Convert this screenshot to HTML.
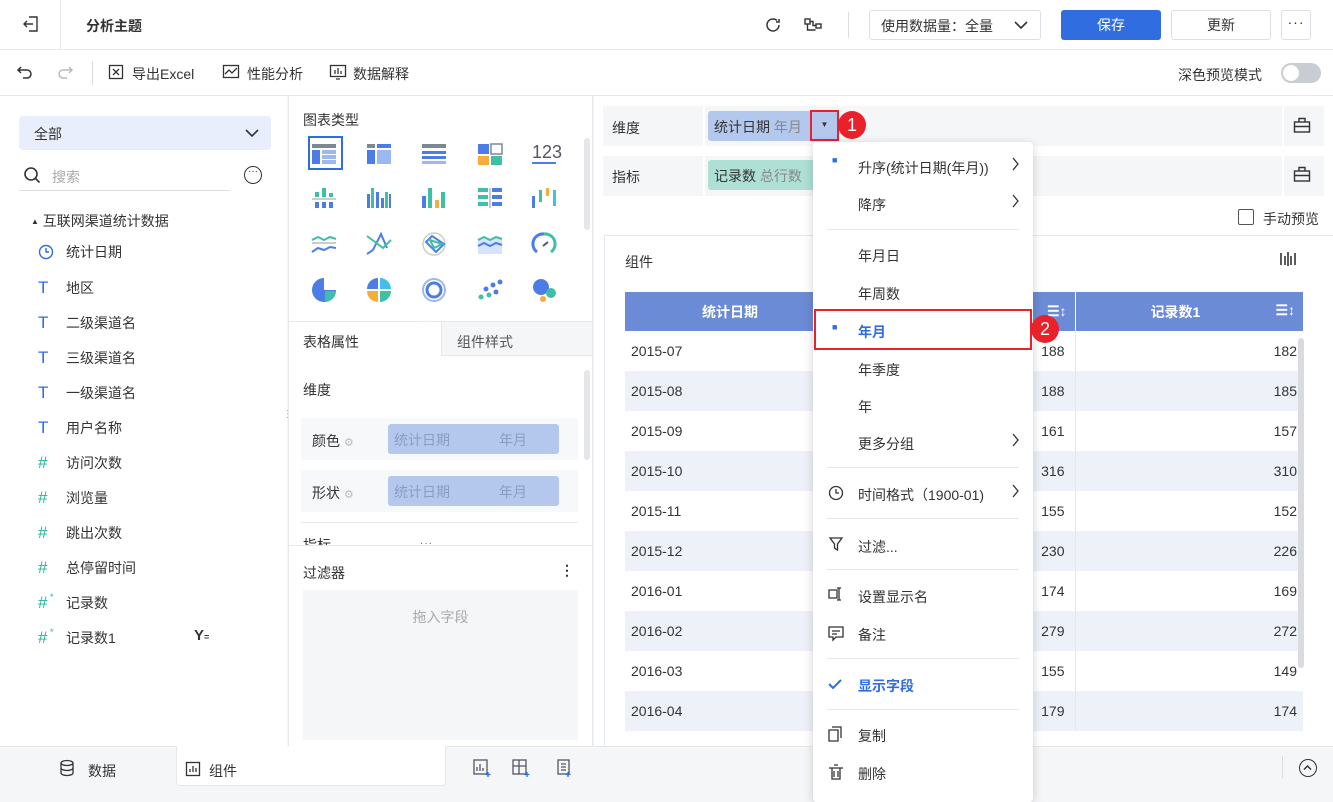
<!DOCTYPE html>
<html><head><meta charset="utf-8"><style>
*{box-sizing:border-box;margin:0;padding:0}
body{width:1333px;height:798px;overflow:hidden;font-family:"Liberation Sans","Noto Sans CJK SC",sans-serif;font-size:14px;color:#333;background:#f5f6f8;position:relative}
.a{position:absolute}
.t{font-size:14px;color:#333}
.tr td{height:40px}
.fl div{height:35px;line-height:35px;position:relative}
.fl span{display:inline-block;width:28px;font-size:17px}
</style></head><body>
<div class="a" style="left:0;top:0;width:1333px;height:50px;background:#fff;border-bottom:1px solid #e6e8eb"></div>
<div class="a" style="left:60px;top:0;width:1px;height:50px;background:#e6e8eb"></div>
<svg class="a" style="left:22px;top:15px" width="18" height="18" viewBox="0 0 18 18" fill="none" stroke="#333" stroke-width="1.4"><path d="M7 2h8v14H7M11 9H2M5 6L2 9l3 3"/></svg>
<div class="a t" style="left:86px;top:16px;font-weight:bold">分析主题</div>
<svg class="a" style="left:763px;top:15px" width="20" height="20" viewBox="0 0 20 20" fill="none" stroke="#333" stroke-width="1.5"><path d="M16 10a6 6 0 1 1-2-4.5M16 4v3h-3"/></svg>
<svg class="a" style="left:803px;top:15px" width="20" height="20" viewBox="0 0 20 20" fill="none" stroke="#333" stroke-width="1.4"><rect x="2" y="4" width="5" height="5"/><rect x="13" y="9" width="5" height="4"/><path d="M4.5 9v6h8M7 6.5h3v4h3"/></svg>
<div class="a" style="left:848px;top:12px;width:1px;height:26px;background:#ddd"></div>
<div class="a" style="left:869px;top:10px;width:172px;height:30px;border:1px solid #dcdfe6;border-radius:3px;background:#fff;padding:5px 11px;color:#333">使用数据量：全量 <svg style="position:absolute;right:12px;top:9px" width="14" height="10" viewBox="0 0 14 10" fill="none" stroke="#333" stroke-width="1.6"><path d="M1 2l6 6 6-6"/></svg></div>
<div class="a" style="left:1061px;top:10px;width:100px;height:30px;background:#2f6de1;border-radius:3px;color:#fff;text-align:center;line-height:30px">保存</div>
<div class="a" style="left:1171px;top:10px;width:100px;height:30px;border:1px solid #dcdfe6;border-radius:3px;background:#fff;text-align:center;line-height:28px">更新</div>
<div class="a" style="left:1281px;top:10px;width:30px;height:30px;border:1px solid #dcdfe6;border-radius:3px;background:#fff;text-align:center;line-height:22px;letter-spacing:1px">···</div>
<div class="a" style="left:0;top:50px;width:1333px;height:46px;background:#fff;border-bottom:1px solid #e6e8eb"></div>
<svg class="a" style="left:16px;top:64px" width="18" height="16" viewBox="0 0 18 16" fill="none" stroke="#333" stroke-width="1.5"><path d="M5 3L2 6l3 3M2 6h9a4 4 0 0 1 0 8H7"/></svg>
<svg class="a" style="left:56px;top:64px" width="18" height="16" viewBox="0 0 18 16" fill="none" stroke="#bbb" stroke-width="1.5"><path d="M13 3l3 3-3 3M16 6H7a4 4 0 0 0 0 8h4"/></svg>
<div class="a" style="left:92px;top:61px;width:1px;height:24px;background:#ddd"></div>
<svg class="a" style="left:108px;top:64px" width="16" height="16" viewBox="0 0 16 16" fill="none" stroke="#333" stroke-width="1.3"><rect x="1.5" y="1.5" width="13" height="13"/><path d="M5 5l6 6M11 5l-6 6"/></svg>
<div class="a t" style="left:132px;top:64px">导出Excel</div>
<svg class="a" style="left:222px;top:64px" width="18" height="16" viewBox="0 0 18 16" fill="none" stroke="#333" stroke-width="1.3"><rect x="1.5" y="1.5" width="15" height="12"/><path d="M3 10l4-4 3 3 5-5"/></svg>
<div class="a t" style="left:247px;top:64px">性能分析</div>
<svg class="a" style="left:329px;top:64px" width="18" height="16" viewBox="0 0 18 16" fill="none" stroke="#333" stroke-width="1.3"><rect x="1.5" y="1.5" width="15" height="11"/><path d="M6 10V6M9 10V4M12 10V7M7 15h4"/></svg>
<div class="a t" style="left:353px;top:64px">数据解释</div>
<div class="a t" style="left:1178px;top:65px">深色预览模式</div>
<div class="a" style="left:1281px;top:63px;width:40px;height:20px;border-radius:10px;background:#c9ccd2"><div style="position:absolute;left:2px;top:2px;width:16px;height:16px;border-radius:8px;background:#fff"></div></div>
<div class="a" style="left:0;top:96px;width:287px;height:650px;background:#fff"></div>
<div class="a" style="left:19px;top:116px;width:252px;height:34px;background:#e8eefc;border-radius:4px;padding:8px 15px">全部<svg style="position:absolute;right:12px;top:12px" width="14" height="10" viewBox="0 0 14 10" fill="none" stroke="#333" stroke-width="1.6"><path d="M1 2l6 6 6-6"/></svg></div>
<svg class="a" style="left:23px;top:166px" width="18" height="18" viewBox="0 0 18 18" fill="none" stroke="#333" stroke-width="1.6"><circle cx="8" cy="8" r="6"/><path d="M12.5 12.5l4 4"/></svg>
<div class="a" style="left:52px;top:167px;color:#aaa">搜索</div>
<div class="a" style="left:19px;top:190px;width:211px;height:1px;background:#dcdfe6"></div>
<div class="a" style="left:244px;top:166px;width:18px;height:18px;border:1.5px solid #333;border-radius:50%;font-size:10px;text-align:center;line-height:9px">···</div>
<div class="a" style="left:31px;top:211px;font-size:14px"><span style="font-size:8px;vertical-align:2px">▲</span> 互联网渠道统计数据</div>
<div class="a fl" style="left:38px;top:235px;font-size:14px">
<div><svg style="vertical-align:-3px;margin-right:12px" width="16" height="16" viewBox="0 0 16 16" fill="none" stroke="#2f6de1" stroke-width="1.4"><circle cx="8" cy="8" r="6.5"/><path d="M8 4v4h3"/></svg>统计日期</div>
<div><span style="color:#2f6de1">T</span>地区</div>
<div><span style="color:#2f6de1">T</span>二级渠道名</div>
<div><span style="color:#2f6de1">T</span>三级渠道名</div>
<div><span style="color:#2f6de1">T</span>一级渠道名</div>
<div><span style="color:#2f6de1">T</span>用户名称</div>
<div><span style="color:#22b59a">#</span>访问次数</div>
<div><span style="color:#22b59a">#</span>浏览量</div>
<div><span style="color:#22b59a">#</span>跳出次数</div>
<div><span style="color:#22b59a">#</span>总停留时间</div>
<div><span style="color:#22b59a">#</span>记录数<i style="position:absolute;left:12px;top:-5px;font-size:9px;color:#22b59a;font-style:normal">*</i></div>
<div><span style="color:#22b59a">#</span>记录数1<i style="position:absolute;left:12px;top:-5px;font-size:9px;color:#22b59a;font-style:normal">*</i></div>
</div>
<div class="a" style="left:194px;top:627px;font-weight:bold;font-size:15px">Y<span style="font-size:9px">=</span></div>
<div class="a" style="left:283px;top:412px;font-size:10px;line-height:5px;color:#666">⋮⋮</div>
<div class="a" style="left:288px;top:96px;width:305px;height:650px;background:#fff;border-left:1px solid #e6e8eb;border-right:1px solid #e6e8eb"></div>
<div class="a t" style="left:303px;top:110px">图表类型</div>
<div class="a" style="left:308px;top:136px;width:35px;height:34px;border:2px solid #2f6de1"></div>
<svg class="a" style="left:300px;top:136px" width="270" height="170" viewBox="0 0 270 170">
<g transform="translate(12,8)"><rect width="24" height="4" fill="#7e8794"/><rect y="6" width="8" height="14" fill="#4c7de6"/><rect x="10" y="6" width="14" height="4" fill="#9db8f0"/><rect x="10" y="11" width="14" height="4" fill="#9db8f0"/><rect x="10" y="16" width="14" height="4" fill="#9db8f0"/></g>
<g transform="translate(67,8)"><rect width="8" height="4" fill="#7e8794"/><rect x="10" width="14" height="4" fill="#4c7de6"/><rect y="6" width="8" height="14" fill="#4c7de6"/><rect x="10" y="6" width="14" height="14" fill="#9db8f0"/></g>
<g transform="translate(122,8)"><rect width="24" height="4" fill="#7e8794"/><rect y="7" width="24" height="3" fill="#4c7de6"/><rect y="12" width="24" height="3" fill="#4c7de6"/><rect y="17" width="24" height="3" fill="#9db8f0"/></g>
<g transform="translate(178,8)"><rect width="11" height="10" fill="#4c7de6"/><rect x="13" width="11" height="10" fill="none" stroke="#7e8794" stroke-width="1.5"/><rect y="12" width="11" height="9" fill="#f6ad3c"/><rect x="13" y="12" width="11" height="9" fill="#3fbfa5"/></g>
<text x="232" y="22" font-size="18" fill="#556" font-family="Liberation Sans">123</text><rect x="232" y="26" width="24" height="2" fill="#4c7de6"/>
<g transform="translate(12,52)"><rect x="0" y="10" width="24" height="2" fill="#ccc"/><rect x="3" y="4" width="4" height="5" fill="#3fbfa5"/><rect x="10" y="0" width="4" height="9" fill="#3fbfa5"/><rect x="17" y="5" width="4" height="4" fill="#3fbfa5"/><rect x="3" y="14" width="4" height="6" fill="#4c7de6"/><rect x="10" y="14" width="4" height="6" fill="#4c7de6"/><rect x="17" y="14" width="4" height="6" fill="#4c7de6"/></g>
<g transform="translate(67,52)"><rect x="0" y="6" width="3" height="14" fill="#4c7de6"/><rect x="4" y="0" width="3" height="20" fill="#3fbfa5"/><rect x="9" y="4" width="3" height="16" fill="#4c7de6"/><rect x="14" y="10" width="3" height="10" fill="#4c7de6"/><rect x="18" y="4" width="3" height="16" fill="#3fbfa5"/><rect x="22" y="6" width="2" height="14" fill="#4c7de6"/></g>
<g transform="translate(122,52)"><rect x="0" y="8" width="4" height="12" fill="#4c7de6"/><rect x="6" y="0" width="4" height="20" fill="#3fbfa5"/><rect x="13" y="12" width="4" height="8" fill="#f6ad3c"/><rect x="19" y="4" width="4" height="16" fill="#3fbfa5"/></g>
<g transform="translate(178,52)"><rect width="10" height="4" fill="#3fbfa5"/><rect x="14" width="10" height="4" fill="#4c7de6"/><rect y="7" width="10" height="4" fill="#3fbfa5"/><rect x="14" y="7" width="10" height="4" fill="#4c7de6"/><rect y="14" width="10" height="4" fill="#3fbfa5"/><rect x="14" y="14" width="10" height="4" fill="#4c7de6"/><rect x="11" y="0" width="2" height="20" fill="#ccc"/></g>
<g transform="translate(232,52)"><rect x="0" y="8" width="3" height="12" fill="#4c7de6"/><rect x="7" y="2" width="3" height="12" fill="#3fbfa5"/><rect x="14" y="0" width="3" height="8" fill="#f6ad3c"/><rect x="21" y="2" width="3" height="16" fill="#42c0e8"/></g>
<g transform="translate(12,98)" fill="none" stroke-width="2"><path d="M0 6l6-3 6 3 6-3 6 2" stroke="#3fbfa5"/><path d="M0 9h24" stroke="#ccc"/><path d="M0 18l6-4 6 2 6-3 6 1" stroke="#4c7de6"/></g>
<g transform="translate(67,98)" fill="none" stroke-width="2"><path d="M0 20l6-4 8-16 6 14" stroke="#4c7de6"/><path d="M0 2l8 6 8 6 8-8" stroke="#3fbfa5"/></g>
<g transform="translate(122,96)" fill="none"><circle cx="12" cy="12" r="11" stroke="#ccc" stroke-width="1.5"/><path d="M4 10l6-6 12 8-8 8z" stroke="#4c7de6" stroke-width="2"/><path d="M8 8l12 4-8 4z" stroke="#3fbfa5" stroke-width="2"/></g>
<g transform="translate(178,98)"><path d="M0 6l6-3 6 3 6-3 6 2v15H0z" fill="#d7e2fb"/><path d="M0 6l6-3 6 3 6-3 6 2" stroke="#3fbfa5" stroke-width="2" fill="none"/><path d="M0 12l6-3 6 3 6-3 6 2" stroke="#4c7de6" stroke-width="2" fill="none"/></g>
<g transform="translate(232,96)" fill="none" stroke-width="3"><path d="M5 20A10 10 0 0 1 12 2" stroke="#4c7de6"/><path d="M12 2A10 10 0 0 1 19 20" stroke="#3fbfa5"/><path d="M11 14l5-4" stroke="#556" stroke-width="2"/></g>
<g transform="translate(12,142)"><path d="M12 12V0A12 12 0 1 0 24 12z" fill="#4c7de6"/><path d="M13 13h11a11 11 0 0 1-11 11z" fill="#3fbfa5"/></g>
<g transform="translate(67,142)"><path d="M11 11V0A11 11 0 0 0 0 11z" fill="#4c7de6"/><path d="M13 11V0A11 11 0 0 1 24 11z" fill="#42c0e8"/><path d="M11 13H0a11 11 0 0 0 11 11z" fill="#f6ad3c"/><path d="M13 13h11a11 11 0 0 1-11 11z" fill="#3fbfa5"/></g>
<g transform="translate(122,142)" fill="none"><circle cx="12" cy="12" r="11" stroke="#9db8f0" stroke-width="2"/><circle cx="12" cy="12" r="7" stroke="#4c7de6" stroke-width="3"/></g>
<g transform="translate(178,142)"><circle cx="22" cy="4" r="2.5" fill="#4c7de6"/><circle cx="15" cy="7" r="2.5" fill="#4c7de6"/><circle cx="8" cy="11" r="2.5" fill="#4c7de6"/><circle cx="18" cy="14" r="2.5" fill="#4c7de6"/><circle cx="11" cy="17" r="2.5" fill="#3fbfa5"/><circle cx="3" cy="19" r="2.5" fill="#3fbfa5"/></g>
<g transform="translate(232,142)"><circle cx="9" cy="9" r="8" fill="#4c7de6"/><circle cx="19" cy="15" r="5" fill="#3fbfa5"/><circle cx="11" cy="21" r="3" fill="#f6ad3c"/></g>
</svg>
<div class="a" style="left:584px;top:138px;width:6px;height:92px;border-radius:3px;background:#e4e6ea"></div>
<div class="a" style="left:420px;top:316px;font-size:10px;color:#666;letter-spacing:1px">···</div>
<div class="a" style="left:289px;top:321px;width:303px;height:1px;background:#e6e8eb"></div>
<div class="a" style="left:441px;top:322px;width:151px;height:34px;background:#f5f6f8;border-left:1px solid #e6e8eb;border-bottom:1px solid #e6e8eb"></div>
<div class="a t" style="left:303px;top:332px">表格属性</div>
<div class="a" style="left:457px;top:332px;color:#555">组件样式</div>
<div class="a t" style="left:303px;top:380px">维度</div>
<div class="a" style="left:584px;top:370px;width:6px;height:90px;border-radius:3px;background:#e4e6ea"></div>
<div class="a" style="left:301px;top:418px;width:277px;height:42px;background:#f7f8fa"></div>
<div class="a" style="left:301px;top:470px;width:277px;height:42px;background:#f7f8fa"></div>
<div class="a t" style="left:312px;top:431px">颜色 <span style="color:#bbb;font-size:11px">⚙</span></div>
<div class="a t" style="left:312px;top:483px">形状 <span style="color:#bbb;font-size:11px">⚙</span></div>
<div class="a" style="left:388px;top:424px;width:171px;height:30px;background:#b4c8ee;border-radius:3px;color:#8a9cc4;padding:6px 6px">统计日期<span style="position:absolute;left:111px">年月</span></div>
<div class="a" style="left:388px;top:476px;width:171px;height:30px;background:#b4c8ee;border-radius:3px;color:#8a9cc4;padding:6px 6px">统计日期<span style="position:absolute;left:111px">年月</span></div>
<div class="a" style="left:301px;top:522px;width:277px;height:1px;background:#e6e8eb"></div>
<div class="a t" style="left:303px;top:535px;height:10px;overflow:hidden">指标</div>
<div class="a" style="left:289px;top:545px;width:303px;height:1px;background:#e6e8eb"></div>
<div class="a" style="left:420px;top:538px;font-size:10px;color:#666;letter-spacing:1px">···</div>
<div class="a t" style="left:303px;top:563px">过滤器</div>
<div class="a" style="left:560px;top:562px;font-weight:bold">⋮</div>
<div class="a" style="left:303px;top:590px;width:275px;height:150px;background:#f5f6f8;color:#aaa;text-align:center;padding-top:17px">拖入字段</div>
<div class="a" style="left:594px;top:96px;width:739px;height:650px;background:#fff"></div>
<div class="a" style="left:603px;top:106px;width:721px;height:40px;background:#f5f6f8"></div>
<div class="a" style="left:603px;top:156px;width:721px;height:40px;background:#f5f6f8"></div>
<div class="a" style="left:703px;top:106px;width:2px;height:90px;background:#fff"></div>
<div class="a" style="left:703px;top:146px;width:621px;height:10px;background:#fff"></div>
<div class="a" style="left:1282px;top:106px;width:2px;height:90px;background:#fff"></div>
<div class="a t" style="left:612px;top:118px">维度</div>
<div class="a t" style="left:612px;top:167px">指标</div>
<div class="a" style="left:708px;top:111px;width:130px;height:30px;background:#b4c8ee;border-radius:3px 0 0 3px;padding:6px 6px">统计日期 <span style="color:#888">年月</span></div>
<div class="a" style="left:810px;top:110px;width:29px;height:31px;border:2px solid #e8212b;background:#b4c8ee;text-align:center;font-size:8px;line-height:26px">▼</div>
<div class="a" style="left:838px;top:111px;width:28px;height:28px;border-radius:50%;background:#e8212b;color:#fff;text-align:center;line-height:28px;font-size:18px">1</div>
<div class="a" style="left:708px;top:160px;width:110px;height:30px;background:#aee0d6;border-radius:3px;padding:6px 6px">记录数 <span style="color:#888">总行数</span></div>
<svg class="a" style="left:1293px;top:117px" width="18" height="16" viewBox="0 0 18 16" fill="none" stroke="#333" stroke-width="1.4"><rect x="1.5" y="5" width="15" height="10"/><path d="M6 5V1.5h6V5M1.5 9.5h15"/></svg>
<svg class="a" style="left:1293px;top:166px" width="18" height="16" viewBox="0 0 18 16" fill="none" stroke="#333" stroke-width="1.4"><rect x="1.5" y="5" width="15" height="10"/><path d="M6 5V1.5h6V5M1.5 9.5h15"/></svg>
<div class="a" style="left:1238px;top:209px;width:16px;height:16px;border:1px solid #555;border-radius:2px;background:#fff"></div>
<div class="a t" style="left:1263px;top:209px">手动预览</div>
<div class="a" style="left:604px;top:235px;width:729px;height:511px;border:1px solid #e6e8eb;border-right:none;border-bottom:none;background:#fff"></div>
<div class="a t" style="left:625px;top:252px">组件</div>
<svg class="a" style="left:1279px;top:251px" width="18" height="16" viewBox="0 0 18 16" stroke="#333" stroke-width="1.6"><path d="M2 2v12M6 5v9M9 1v14M12 5v9M16 2v12"/></svg>
<table class="a" style="left:625px;top:292px;width:678px;border-collapse:collapse;font-size:14px">
<tr style="background:#6b8bd6;color:#fff;font-weight:bold;height:39px"><td style="width:210px;text-align:center">统计日期</td><td style="width:240px;text-align:right;padding-right:8px">☰↕</td><td style="text-align:center;border-left:1px solid #fff">记录数1<span style="float:right;margin-right:8px">☰↕</span></td></tr>
<tr class="tr" style="background:#fff"><td style="padding-left:6px">2015-07</td><td style="text-align:right;padding-right:10px">188</td><td style="text-align:right;padding-right:6px;border-left:1px solid #e6e8eb">182</td></tr>
<tr class="tr" style="background:#eef1f8"><td style="padding-left:6px">2015-08</td><td style="text-align:right;padding-right:10px">188</td><td style="text-align:right;padding-right:6px;border-left:1px solid #e6e8eb">185</td></tr>
<tr class="tr" style="background:#fff"><td style="padding-left:6px">2015-09</td><td style="text-align:right;padding-right:10px">161</td><td style="text-align:right;padding-right:6px;border-left:1px solid #e6e8eb">157</td></tr>
<tr class="tr" style="background:#eef1f8"><td style="padding-left:6px">2015-10</td><td style="text-align:right;padding-right:10px">316</td><td style="text-align:right;padding-right:6px;border-left:1px solid #e6e8eb">310</td></tr>
<tr class="tr" style="background:#fff"><td style="padding-left:6px">2015-11</td><td style="text-align:right;padding-right:10px">155</td><td style="text-align:right;padding-right:6px;border-left:1px solid #e6e8eb">152</td></tr>
<tr class="tr" style="background:#eef1f8"><td style="padding-left:6px">2015-12</td><td style="text-align:right;padding-right:10px">230</td><td style="text-align:right;padding-right:6px;border-left:1px solid #e6e8eb">226</td></tr>
<tr class="tr" style="background:#fff"><td style="padding-left:6px">2016-01</td><td style="text-align:right;padding-right:10px">174</td><td style="text-align:right;padding-right:6px;border-left:1px solid #e6e8eb">169</td></tr>
<tr class="tr" style="background:#eef1f8"><td style="padding-left:6px">2016-02</td><td style="text-align:right;padding-right:10px">279</td><td style="text-align:right;padding-right:6px;border-left:1px solid #e6e8eb">272</td></tr>
<tr class="tr" style="background:#fff"><td style="padding-left:6px">2016-03</td><td style="text-align:right;padding-right:10px">155</td><td style="text-align:right;padding-right:6px;border-left:1px solid #e6e8eb">149</td></tr>
<tr class="tr" style="background:#eef1f8"><td style="padding-left:6px">2016-04</td><td style="text-align:right;padding-right:10px">179</td><td style="text-align:right;padding-right:6px;border-left:1px solid #e6e8eb">174</td></tr>
</table>
<div class="a" style="left:1298px;top:338px;width:6px;height:330px;border-radius:3px;background:#d9dbe0"></div>
<div class="a" style="left:0;top:746px;width:1333px;height:52px;background:#f5f6f8;border-top:1px solid #e6e8eb"></div>
<svg class="a" style="left:59px;top:759px" width="16" height="18" viewBox="0 0 16 18" fill="none" stroke="#333" stroke-width="1.3"><ellipse cx="8" cy="4" rx="6" ry="2.5"/><path d="M2 4v10c0 1.4 2.7 2.5 6 2.5s6-1.1 6-2.5V4M2 9c0 1.4 2.7 2.5 6 2.5s6-1.1 6-2.5"/></svg>
<div class="a t" style="left:88px;top:761px">数据</div>
<div class="a" style="left:176px;top:746px;width:270px;height:40px;background:#fff;border-radius:0 0 4px 4px;border:1px solid #e6e8eb;border-top:none"></div>
<svg class="a" style="left:185px;top:761px" width="16" height="16" viewBox="0 0 16 16" fill="none" stroke="#333" stroke-width="1.3"><rect x="1.5" y="1.5" width="13" height="13"/><path d="M5 11V8M8 11V5M11 11V7"/></svg>
<div class="a t" style="left:209px;top:761px">组件</div>
<svg class="a" style="left:473px;top:758px" width="100" height="20" viewBox="0 0 100 20" fill="none" stroke="#2f6de1" stroke-width="1.3"><rect x="1" y="2" width="13" height="14" stroke="#556"/><path d="M4 13V9M7 13V6M10 13V10" stroke="#556"/><path d="M15 14v5M12.5 16.5h5"/><rect x="40" y="2" width="13" height="14" stroke="#556"/><path d="M40 8h13M46 2v14" stroke="#556"/><path d="M54 14v5M51.5 16.5h5"/><rect x="85" y="2" width="11" height="14" stroke="#556"/><path d="M88 6h5M88 9h5M88 12h5" stroke="#556"/><path d="M95 14v5M92.5 16.5h5"/></svg>
<div class="a" style="left:1282px;top:756px;width:1px;height:22px;background:#ddd"></div>
<div class="a" style="left:1299px;top:759px;width:18px;height:18px;border:1.5px solid #333;border-radius:50%"><svg style="position:absolute;left:3px;top:4px" width="9" height="7" viewBox="0 0 9 7" fill="none" stroke="#333" stroke-width="1.5"><path d="M1 5.5l3.5-3.5 3.5 3.5"/></svg></div>
<div class="a" style="left:813px;top:142px;width:220px;height:660px;background:#fff;border-radius:4px;box-shadow:0 2px 10px rgba(0,0,0,.18)"></div>
<div class="a" style="left:813px;top:142px;width:220px;font-size:14px;color:#333">
<div style="position:absolute;top:16px;left:45px">升序(统计日期(年月))</div><div style="position:absolute;top:13px;left:19px;color:#2f6de1;font-size:9px">■</div>
<div style="position:absolute;top:53px;left:45px">降序</div>
<div style="position:absolute;top:87px;left:14px;width:192px;height:1px;background:#e6e8eb"></div>
<div style="position:absolute;top:104px;left:45px">年月日</div>
<div style="position:absolute;top:142px;left:45px">年周数</div>
<div style="position:absolute;top:180px;left:45px;color:#2f6de1;font-weight:bold">年月</div><div style="position:absolute;top:180px;left:19px;color:#2f6de1;font-size:9px">■</div>
<div style="position:absolute;top:218px;left:45px">年季度</div>
<div style="position:absolute;top:255px;left:45px">年</div>
<div style="position:absolute;top:292px;left:45px">更多分组</div>
<div style="position:absolute;top:325px;left:14px;width:192px;height:1px;background:#e6e8eb"></div>
<div style="position:absolute;top:343px;left:45px">时间格式（1900-01)</div>
<div style="position:absolute;top:376px;left:14px;width:192px;height:1px;background:#e6e8eb"></div>
<div style="position:absolute;top:395px;left:45px">过滤...</div>
<div style="position:absolute;top:427px;left:14px;width:192px;height:1px;background:#e6e8eb"></div>
<div style="position:absolute;top:445px;left:45px">设置显示名</div>
<div style="position:absolute;top:483px;left:45px">备注</div>
<div style="position:absolute;top:516px;left:14px;width:192px;height:1px;background:#e6e8eb"></div>
<div style="position:absolute;top:534px;left:45px;color:#2f6de1;font-weight:bold">显示字段</div>
<div style="position:absolute;top:567px;left:14px;width:192px;height:1px;background:#e6e8eb"></div>
<div style="position:absolute;top:584px;left:45px">复制</div>
<div style="position:absolute;top:622px;left:45px">删除</div>
</div>
<svg class="a" style="left:813px;top:142px" width="220" height="656" viewBox="0 0 220 656" fill="none" stroke="#333" stroke-width="1.3">
<path d="M200 16l5 6-5 6M200 53l5 6-5 6M200 292l5 6-5 6M200 343l5 6-5 6"/>
<circle cx="23" cy="351" r="6.5"/><path d="M23 347v4h3"/>
<path d="M17 396h12l-4.5 6v6l-3-2v-4z"/>
<path d="M16 448h8v8h-8zM26 446v12M24 446h4M24 458h4"/>
<path d="M16 485h14v10h-7l-3 3v-3h-4zM19 489h8M19 492h5"/>
<path d="M16 542l4 4 8-8" stroke="#2f6de1" stroke-width="2"/>
<path d="M16 588h9v11h-9zM19 585h9v11"/>
<path d="M16 626h14M19 626v11h8v-11M21 623h4M21 629v6M25 629v6"/>
</svg>
<div class="a" style="left:814px;top:309px;width:218px;height:41px;border:2px solid #e8212b"></div>
<div class="a" style="left:1031px;top:315px;width:28px;height:28px;border-radius:50%;background:#e8212b;color:#fff;text-align:center;line-height:28px;font-size:18px">2</div>
</body></html>
